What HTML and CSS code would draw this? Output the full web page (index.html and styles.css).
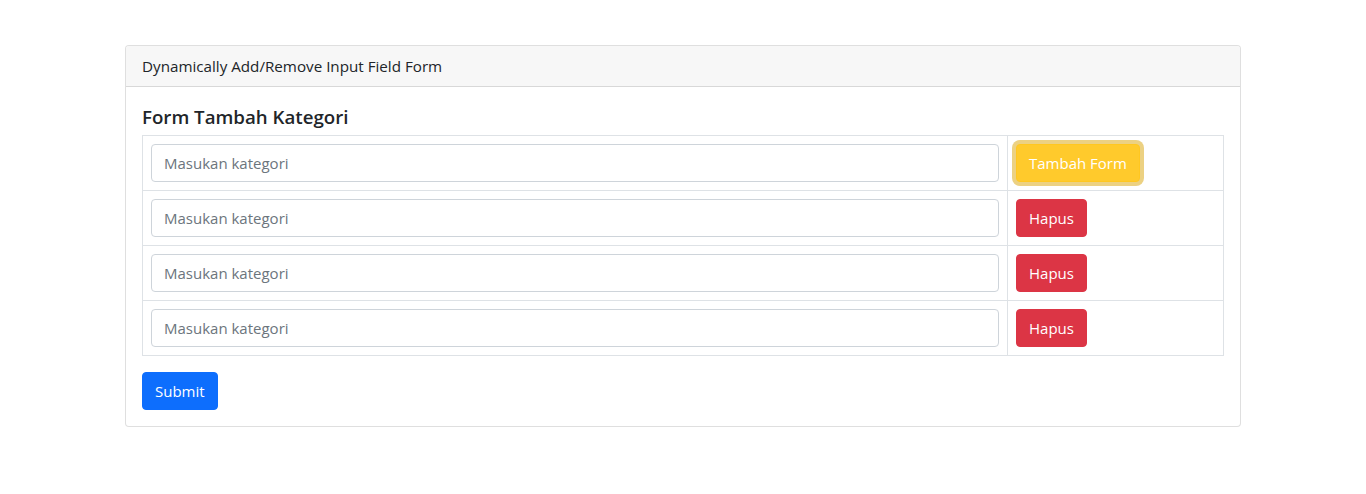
FILE: index.html
```html
<!DOCTYPE html>
<html lang="id">
<head>
<meta charset="utf-8">
<title>Dynamically Add/Remove Input Field Form</title>
<link rel="stylesheet" href="styles.css">
</head>
<body>
<div class="container">
  <div class="card">
    <div class="card-header">Dynamically Add/Remove Input Field Form</div>
    <div class="card-body">
      <h5 class="title">Form Tambah Kategori</h5>
      <table class="table">
        <tr>
          <td class="col-input"><input class="form-control" type="text" placeholder="Masukan kategori"></td>
          <td class="col-action"><button class="btn btn-warning focused" type="button">Tambah Form</button></td>
        </tr>
        <tr>
          <td class="col-input"><input class="form-control" type="text" placeholder="Masukan kategori"></td>
          <td class="col-action"><button class="btn btn-danger" type="button">Hapus</button></td>
        </tr>
        <tr>
          <td class="col-input"><input class="form-control" type="text" placeholder="Masukan kategori"></td>
          <td class="col-action"><button class="btn btn-danger" type="button">Hapus</button></td>
        </tr>
        <tr>
          <td class="col-input"><input class="form-control" type="text" placeholder="Masukan kategori"></td>
          <td class="col-action"><button class="btn btn-danger" type="button">Hapus</button></td>
        </tr>
      </table>
      <button class="btn btn-primary" type="submit">Submit</button>
    </div>
  </div>
</div>
</body>
</html>
```

FILE: styles.css
```css
* { box-sizing: border-box; }
html, body { margin: 0; padding: 0; }
body {
  font-family: "Open Sans", "Noto Sans", "Liberation Sans", sans-serif;
  font-size: 16px;
  line-height: 1.5;
  color: #212529;
  background: #fff;
}
.container {
  width: 1140px;
  margin: 0 auto;
  padding: 45px 12px 0;
}
.card {
  border: 1px solid rgba(0,0,0,.125);
  border-radius: 4px;
  background: #fff;
}
.card-header {
  padding: 8px 16px;
  background: #f7f7f7;
  border-bottom: 1px solid rgba(0,0,0,.125);
  border-radius: 3px 3px 0 0;
  font-size: 15.2px;
  line-height: 24px;
}
.card-body { padding: 16px; }
.title {
  margin: 0 0 6px;
  font-size: 18.7px;
  font-weight: 600;
  line-height: 24px;
  padding-top: 2px;
}
.table {
  width: 100%;
  border-collapse: collapse;
  margin-bottom: 16px;
}
.table td {
  border: 1px solid #dee2e6;
  padding: 8px;
  vertical-align: top;
}
.col-action { width: 216px; }
.form-control {
  display: block;
  width: 100%;
  height: 38px;
  padding: 6px 12px;
  font-family: inherit;
  font-size: 15px;
  line-height: 24px;
  color: #212529;
  background: #fff;
  border: 1px solid #ced4da;
  border-radius: 4px;
  outline: none;
}
.form-control::placeholder { color: #6c757d; }
.btn {
  display: inline-block;
  height: 38px;
  padding: 6px 12px;
  font-family: inherit;
  font-size: 15px;
  line-height: 24px;
  color: #fff;
  border: 1px solid transparent;
  border-radius: 4px;
  cursor: pointer;
  margin: 0;
}
.btn-warning { background: #ffca2c; border-color: #ffc720; }
.btn-warning.focused { box-shadow: 0 0 0 4px rgba(217,164,6,.5); }
.btn-danger { background: #dc3545; border-color: #dc3545; }
.btn-primary { background: #0d6efd; border-color: #0d6efd; }
```
